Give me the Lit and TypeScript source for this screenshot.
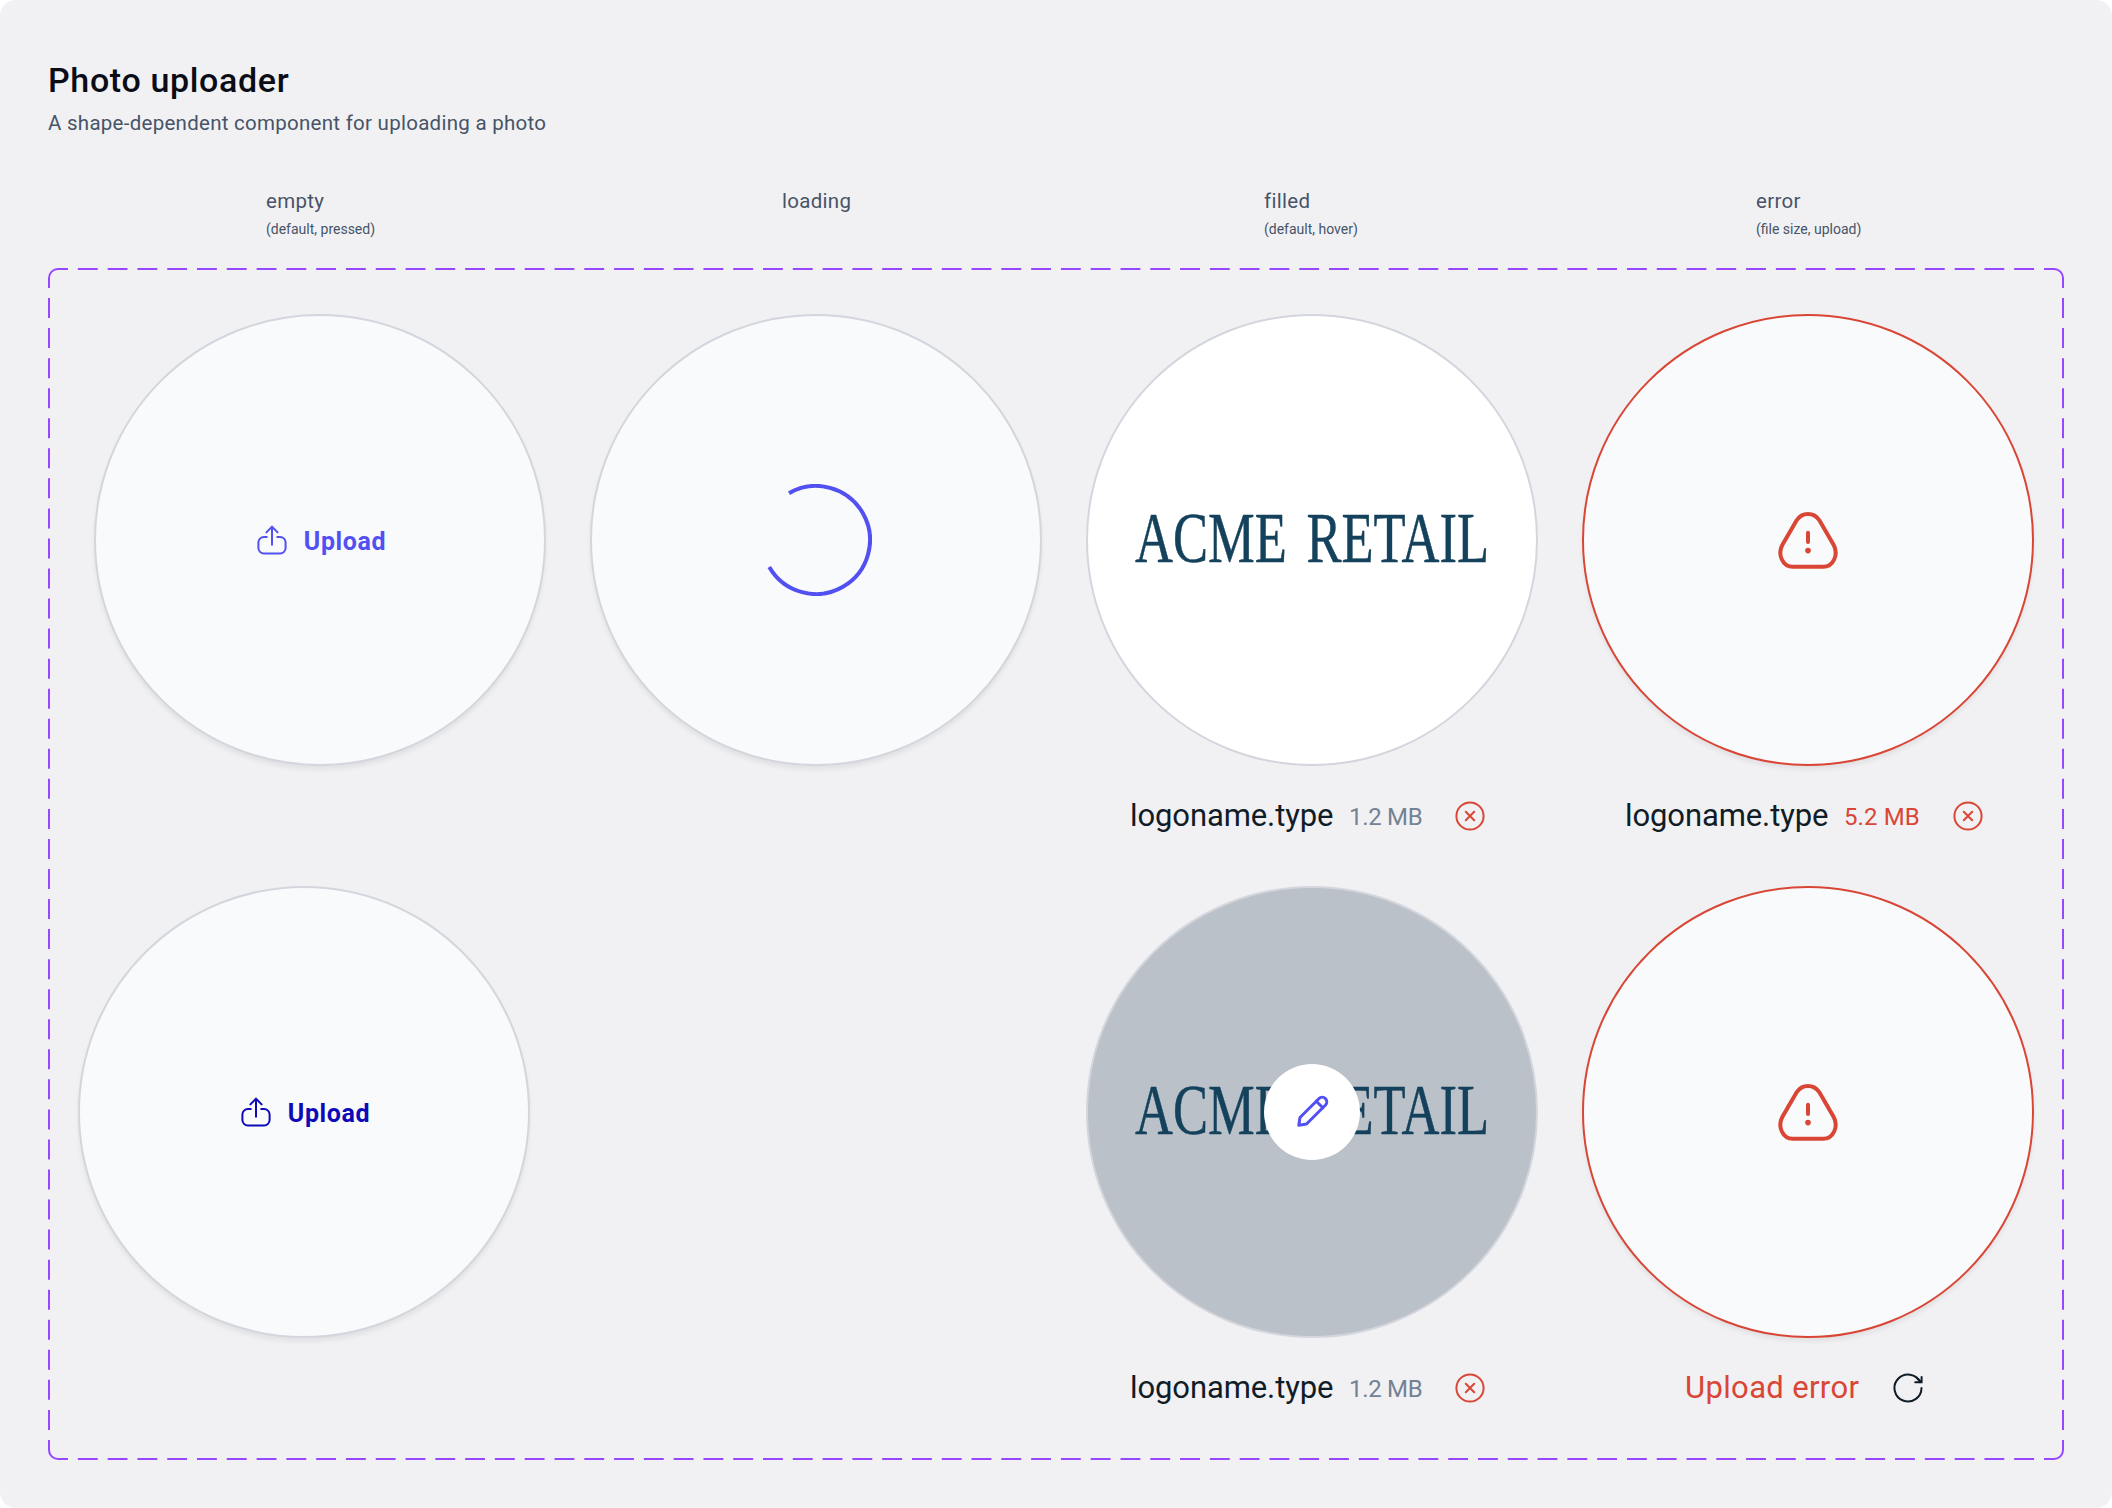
import { LitElement, html, svg, css, nothing } from "lit";
import { customElement, property } from "lit/decorators.js";

const FONT = css`Roboto, "Liberation Sans", sans-serif`;

const ICONS = {
	upload: svg`
		<path d="M10.8 13H7.9A5.5 5.5 0 0 0 2.4 18.5V24A5.5 5.5 0 0 0 7.9 29.5H24.1A5.5 5.5 0 0 0 29.6 24V18.5A5.5 5.5 0 0 0 24.1 13H21.2" />
		<path d="M16 20.8V2.8M10.4 8.4L16 2.6L21.6 8.4" />
	`,
	remove: svg`
		<circle cx="16" cy="16" r="13.6" />
		<path d="M11.8 11.8L20.2 20.2M20.2 11.8L11.8 20.2" />
	`,
	retry: svg`
		<path d="M29.5 16A13.5 13.5 0 1 1 28.2 10.2" />
		<path d="M29.6 5V10.2H23.2M25.4 6.6L29 10" />
	`,
	pencil: svg`
		<path d="M2.8 29.3L4 21.5L23.05 2.45A4.6 4.6 0 0 1 29.55 8.95L10.5 28Z" />
		<path d="M20.3 5.2L26.8 11.7" />
	`,
	alert: svg`
		<path d="M20.5 12.5C26 3.8 38 3.8 43.5 12.5L57.7 37C62.5 46 58 58.7 47 58.7H17C6 58.7 1.5 46 6.3 37Z" />
		<path d="M32 24.7V34" />
		<circle class="dot" cx="32" cy="42.6" r="2.8" />
	`
};

@customElement("ui-icon")
export class UiIcon extends LitElement {
	static styles = css`
		:host {
			display: block;
			flex: none;
			width: 32px;
			height: 32px;
		}

		svg {
			display: block;
			fill: none;
			stroke: currentColor;
			stroke-width: 2;
			stroke-linecap: round;
		}

		.pencil {
			stroke-width: 3;
			stroke-linejoin: round;
			overflow: visible;
		}

		.alert {
			stroke-width: 4;
		}

		.dot {
			fill: currentColor;
			stroke: none;
		}
	`;

	@property() name: keyof typeof ICONS = "upload";

	render() {
		const box = this.name === "alert" ? 64 : 32;
		return html`
			<svg class=${this.name} width="100%" height="100%" viewBox="0 0 ${box} ${box}">${ICONS[this.name]}</svg>
		`;
	}
}

@customElement("acme-logo")
export class AcmeLogo extends LitElement {
	static styles = css`
		:host {
			display: block;
			width: 352px;
			height: 48px;
			margin-bottom: 4px;
		}

		svg {
			display: block;
			overflow: visible;
		}

		text {
			fill: #14415c;
			stroke: #14415c;
			stroke-width: 0.5;
			font-family: "Liberation Serif", serif;
			font-size: 72px;
			word-spacing: 9px;
		}
	`;

	render() {
		return html`
			<svg width="352" height="48" viewBox="0 0 352 48">
				<text x="-1" y="47.5" textLength="354" lengthAdjust="spacingAndGlyphs">ACME RETAIL</text>
			</svg>
		`;
	}
}

@customElement("photo-uploader")
export class PhotoUploader extends LitElement {
	static styles = css`
		:host {
			display: block;
			width: 452px;
			height: 572px;
			font-family: ${FONT};
		}

		.shape {
			display: flex;
			align-items: center;
			justify-content: center;
			position: relative;
			box-sizing: border-box;
			width: 452px;
			height: 452px;
			border: 2px solid #d3d6dd;
			border-radius: 50%;
			background: #f9fafc;
			box-shadow: 0 4px 4px rgba(0, 0, 0, 0.06);
		}

		.filled {
			background: white;
			box-shadow: none;
		}

		.hover {
			background: #bac1c9;
		}

		.error {
			border-color: #d94635;
		}

		.action {
			display: flex;
			align-items: center;
			gap: 16px;
			padding-left: 2px;
			color: #5350f2;
			font-size: 25px;
			font-weight: 700;
			line-height: 32px;
			letter-spacing: 0.6px;
		}

		.label {
			padding-top: 4px;
		}

		.pressed .action {
			color: #0f0ab8;
		}

		.spinner {
			fill: none;
			stroke: #5350f2;
			stroke-width: 4;
		}

		.alert {
			width: 64px;
			height: 64px;
			color: #d94635;
		}

		.edit {
			display: flex;
			align-items: center;
			justify-content: center;
			position: absolute;
			inset: 0;
			width: 96px;
			height: 96px;
			margin: auto;
			border-radius: 50%;
			background: white;
			color: #5350f2;
		}

		.caption {
			display: flex;
			align-items: center;
			height: 32px;
			margin-top: 34px;
			padding-left: 44px;
			color: #101c26;
			white-space: nowrap;
		}

		.error + .caption {
			padding-left: 43px;
		}

		.name {
			width: 219px;
			font-size: 31px;
			line-height: 32px;
			letter-spacing: -0.1px;
		}

		.size {
			width: 105px;
			padding-top: 3px;
			color: #748292;
			font-size: 24px;
			line-height: 29px;
			letter-spacing: -0.3px;
		}

		.error + .caption .size {
			width: 108px;
			color: #d94635;
			letter-spacing: 0.1px;
		}

		.remove,
		.message {
			color: #d94635;
		}

		.message {
			width: 207px;
			padding-left: 60px;
			font-size: 31px;
			line-height: 32px;
			letter-spacing: 0.35px;
		}
	`;

	@property() state = "empty";
	@property() size = "";
	@property() message = "";

	content() {
		switch (this.state) {
			case "loading":
				return html`
					<svg class="spinner" width="112" height="112" viewBox="-56 -56 112 112">
						<path d="M-27 -46.77A54 54 0 1 1 -46.77 27" />
					</svg>
				`;
			case "filled":
				return html`<acme-logo></acme-logo>`;
			case "filled hover":
				return html`
					<acme-logo></acme-logo>
					<div class="edit"><ui-icon name="pencil"></ui-icon></div>
				`;
			case "error":
				return html`<ui-icon class="alert" name="alert"></ui-icon>`;
			default:
				return html`
					<div class="action">
						<ui-icon name="upload"></ui-icon>
						<span class="label">Upload</span>
					</div>
				`;
		}
	}

	caption() {
		if (this.message) {
			return html`
				<div class="caption">
					<div class="message">${this.message}</div>
					<ui-icon name="retry"></ui-icon>
				</div>
			`;
		}
		if (this.size) {
			return html`
				<div class="caption">
					<div class="name">logoname.type</div>
					<div class="size">${this.size}</div>
					<ui-icon class="remove" name="remove"></ui-icon>
				</div>
			`;
		}
		return nothing;
	}

	render() {
		return html`
			<div class="shape ${this.state}">${this.content()}</div>
			${this.caption()}
		`;
	}
}

@customElement("app-root")
export class AppRoot extends LitElement {
	static styles = css`
		:host {
			display: block;
			background: white;
			font-family: ${FONT};
		}

		.page {
			box-sizing: border-box;
			width: 2112px;
			height: 1508px;
			padding: 58px 48px 48px;
			border-radius: 16px;
			background: #f1f1f4;
			color: #475467;
		}

		h1 {
			margin: 0;
			color: #0a0c16;
			font-size: 34px;
			font-weight: 500;
			line-height: 44px;
			letter-spacing: 0.65px;
		}

		p {
			margin: 7px 0 0;
			font-size: 20.5px;
			line-height: 28px;
			letter-spacing: 0.27px;
		}

		.columns {
			display: grid;
			grid-template-columns: repeat(4, 452px);
			column-gap: 44px;
			height: 81px;
			margin-top: 50px;
			padding-left: 46px;
		}

		.column {
			padding-left: 172px;
			font-size: 20.5px;
			line-height: 28px;
			letter-spacing: 0.3px;
		}

		.loading {
			padding-left: 192px;
		}

		.filled {
			padding-left: 178px;
		}

		.error {
			padding-left: 174px;
		}

		.note {
			font-size: 14px;
			letter-spacing: 0;
		}

		.frame {
			position: relative;
			box-sizing: border-box;
			height: 1192px;
			padding: 46px 30px 0 46px;
		}

		.outline {
			position: absolute;
			inset: 0;
			fill: none;
			stroke: #9747ff;
			stroke-width: 2;
		}

		.across {
			stroke-dasharray: 19.86 9.93;
			stroke-dashoffset: 9.93;
		}

		.down {
			stroke-dasharray: 20.03 10.02;
			stroke-dashoffset: 10.02;
		}

		.states {
			display: grid;
			grid-template-columns: repeat(4, 452px);
			column-gap: 44px;
		}

		.shifted {
			margin-left: -16px;
		}

		.last {
			grid-column: 3;
		}
	`;

	render() {
		return html`
			<div class="page">
				<h1>Photo uploader</h1>
				<p>A shape-dependent component for uploading a photo</p>
				<div class="columns">
					<div class="column">empty<div class="note">(default, pressed)</div></div>
					<div class="column loading">loading</div>
					<div class="column filled">filled<div class="note">(default, hover)</div></div>
					<div class="column error">error<div class="note">(file size, upload)</div></div>
				</div>
				<div class="frame">
					<svg class="outline" width="2016" height="1192">
						<path class="across" d="M10 1H2006" />
						<path class="across" d="M10 1191H2006" />
						<path class="down" d="M1 10V1182" />
						<path class="down" d="M2015 10V1182" />
						<path d="M1 10A9 9 0 0 1 10 1M2006 1A9 9 0 0 1 2015 10M2015 1182A9 9 0 0 1 2006 1191M10 1191A9 9 0 0 1 1 1182" />
					</svg>
					<div class="states">
						<photo-uploader></photo-uploader>
						<photo-uploader state="loading"></photo-uploader>
						<photo-uploader state="filled" size="1.2 MB"></photo-uploader>
						<photo-uploader state="error" size="5.2 MB"></photo-uploader>
						<photo-uploader class="shifted" state="pressed"></photo-uploader>
						<photo-uploader class="last" state="filled hover" size="1.2 MB"></photo-uploader>
						<photo-uploader state="error" message="Upload error"></photo-uploader>
					</div>
				</div>
			</div>
		`;
	}
}
